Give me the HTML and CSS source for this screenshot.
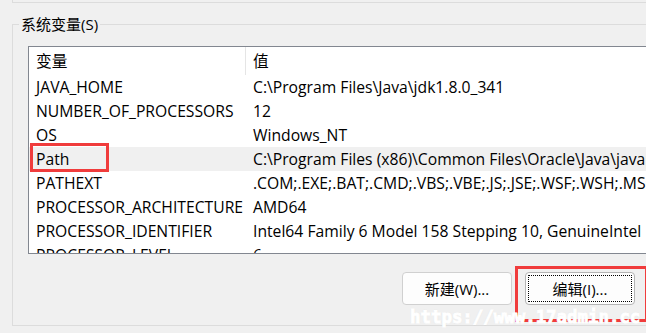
FILE: index.html
```html
<!DOCTYPE html>
<html lang="zh">
<head>
  <meta charset="UTF-8">
  <title>环境变量</title>
  <link rel="stylesheet" href="styles.css">
</head>
<body>
  <div class="prev-group"></div>
  <fieldset class="group">
    <legend>系统变量(S)</legend>
    <div class="list">
      <div class="row head">
        <div class="name">变量</div>
        <div class="value">值</div>
      </div>
      <div class="row"><div class="name">JAVA_HOME</div><div class="value">C:\Program Files\Java\jdk1.8.0_341</div></div>
      <div class="row"><div class="name">NUMBER_OF_PROCESSORS</div><div class="value">12</div></div>
      <div class="row"><div class="name">OS</div><div class="value">Windows_NT</div></div>
      <div class="row selected"><div class="name">Path<span class="mark"></span></div><div class="value">C:\Program Files (x86)\Common Files\Oracle\Java\javapath;C:\Windows\system32</div></div>
      <div class="row"><div class="name">PATHEXT</div><div class="value">.COM;.EXE;.BAT;.CMD;.VBS;.VBE;.JS;.JSE;.WSF;.WSH;.MSC</div></div>
      <div class="row"><div class="name">PROCESSOR_ARCHITECTURE</div><div class="value">AMD64</div></div>
      <div class="row"><div class="name">PROCESSOR_IDENTIFIER</div><div class="value">Intel64 Family 6 Model 158 Stepping 10, GenuineIntel</div></div>
      <div class="row"><div class="name">PROCESSOR_LEVEL</div><div class="value">6</div></div>
    </div>
    <div class="buttons">
      <button>新建(W)...</button>
      <span class="mark-btn"><button class="focus">编辑(I)...</button></span>
    </div>
  </fieldset>
  <div class="watermark">https://www.17admin.cc</div>
</body>
</html>
```

FILE: styles.css
```css
* {box-sizing: border-box;}
html, body {
  margin: 0;
  width: 646px;
  height: 333px;
  overflow: hidden;
}
body {
  background: #f0f0f0;
  font-family: "Open Sans", "Noto Sans CJK SC", sans-serif;
  font-size: 15px;
  color: #000;
  position: relative;
}
.prev-group {
  margin-left: 12px;
  width: 700px;
  height: 3px;
  border-left: 1px solid #dcdcdc;
  border-bottom: 1px solid #dcdcdc;
}
.group {
  margin: 11px 0 0 12px;
  padding: 0 0 20px 0;
  width: 700px;
  min-width: 0;
  border: 1px solid #dcdcdc;
}
.group legend {
  margin-left: 6px;
  padding: 0 2px;
  line-height: 20px;
  font-size: 15px;
}
.list {
  margin: 12px 0 0 15px;
  height: 208px;
  background: #fff;
  border: 1px solid #828790;
  overflow: hidden;
  font-size: 15.7px;
}
.row {
  display: flex;
  height: 24px;
  line-height: 24px;
  white-space: nowrap;
}
.row.head {
  height: 28px;
  line-height: 28px;
}
.name {
  width: 217px;
  flex: none;
  padding-left: 7px;
  position: relative;
}
.value {
  padding-left: 7px;
}
.head .name {
  border-right: 1px solid #e5e5e5;
}
.selected {
  background: #f0f0f0;
}
.mark {
  position: absolute;
  left: 1px;
  top: -4px;
  width: 79px;
  height: 29px;
  border: 3px solid #f03c3c;
}
.buttons {
  display: flex;
  gap: 13px;
  margin: 18px 0 0 389px;
}
button {
  width: 110px;
  height: 33px;
  font: inherit;
  background: #fdfdfd;
  border: 1px solid #d0d0d0;
  border-radius: 4px;
  color: #000;
  padding: 0;
}
button.focus {
  border-color: #b4b4b4;
  outline: 1px dotted #000;
  outline-offset: -4px;
}
.mark-btn {
  position: relative;
  display: block;
}
.mark-btn::after {
  content: "";
  position: absolute;
  left: -10px;
  top: -6px;
  width: 127px;
  height: 50px;
  border: 3px solid #f03c3c;
}
.watermark {
  position: absolute;
  left: 410px;
  top: 307px;
  font-family: "DejaVu Sans Mono", monospace;
  font-weight: bold;
  font-size: 17.4px;
  color: #fff;
  -webkit-text-stroke: 1px #fff;
  text-shadow: 0 0 1px rgba(120, 120, 120, 0.35);
}
```
